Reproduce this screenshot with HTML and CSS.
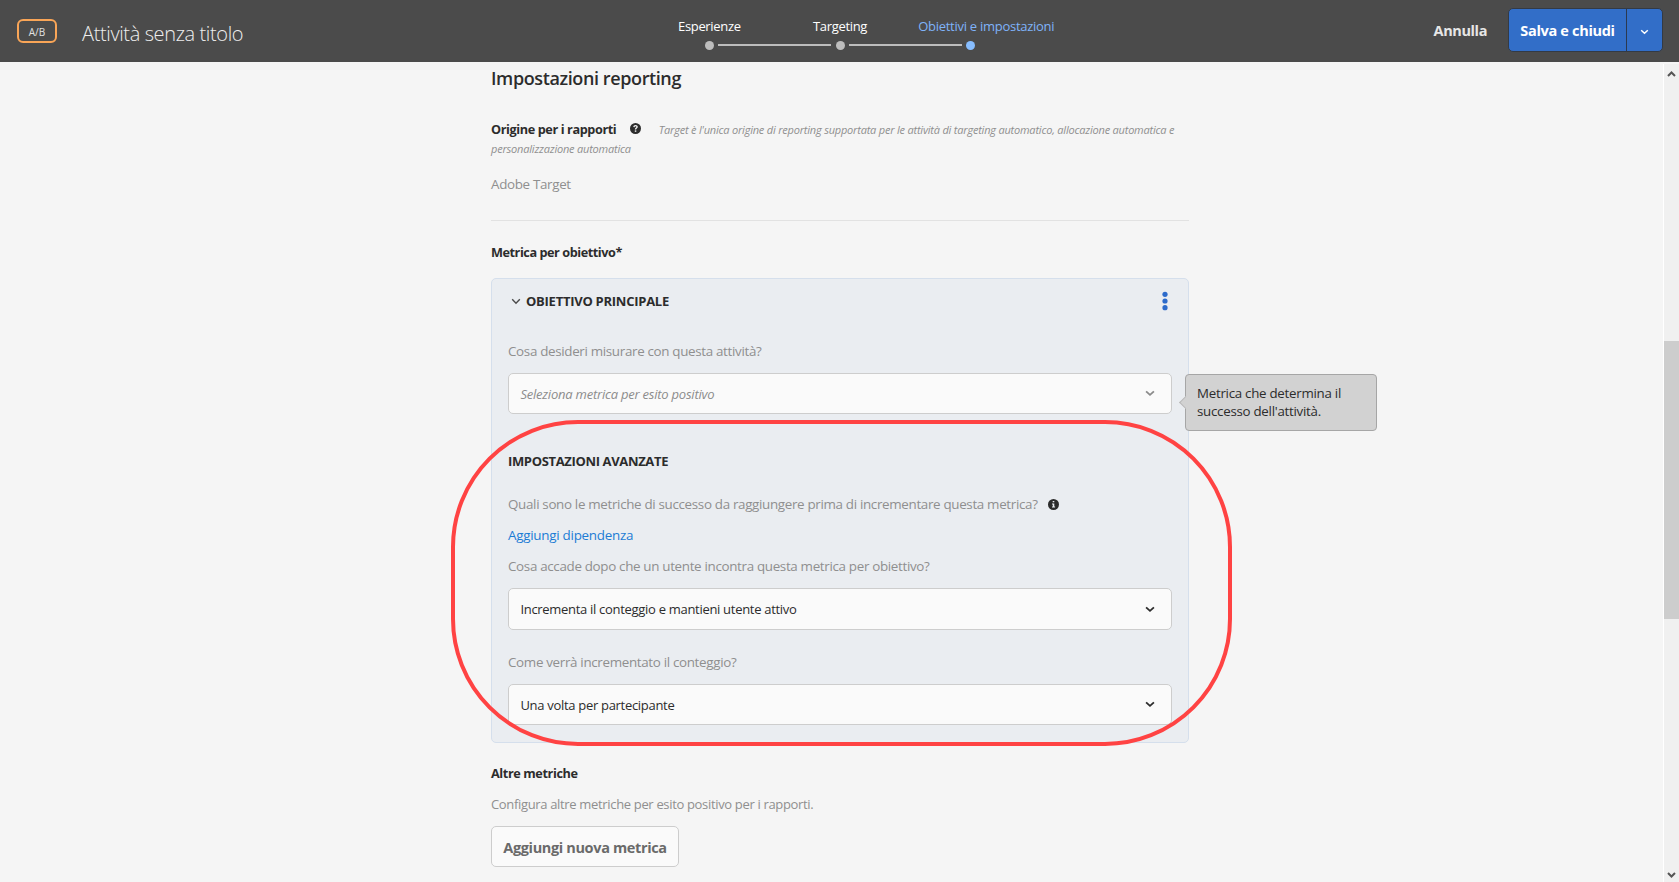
FILE: index.html
```html
<!DOCTYPE html>
<html lang="it">
<head>
<meta charset="utf-8">
<title>Attività senza titolo</title>
<link rel="stylesheet" href="styles.css">
</head>
<body>
<header class="topbar">
  <span class="badge">A/B</span>
  <h1 class="title">Attività senza titolo</h1>
  <nav class="steps">
    <div class="step"><span class="step-label">Esperienze</span><i class="dot"></i></div>
    <div class="step"><span class="step-label">Targeting</span><i class="dot"></i></div>
    <div class="step current"><span class="step-label">Obiettivi e impostazioni</span><i class="dot"></i></div>
  </nav>
  <div class="actions">
    <button class="cancel">Annulla</button>
    <div class="save">
      <button class="save-main">Salva e chiudi</button>
      <button class="save-more" aria-label="Altro"><svg width="9" height="6" viewBox="0 0 9 6"><path d="M1.2 1.2 4.5 4.2 7.8 1.2"/></svg></button>
    </div>
  </div>
</header>
<div class="body">
  <main class="content">
    <h2 class="section-title">Impostazioni reporting</h2>
    <p class="source"><b class="strong">Origine per i rapporti</b><svg class="help" width="11" height="11" viewBox="0 0 11 11"><circle cx="5.5" cy="5.5" r="5.5" fill="#2c2c2c"/><path d="M3.9 4.1C4 2.1 7.2 2.2 7.1 4 7 5.1 5.5 5.1 5.5 6.6" fill="none" stroke="#f5f5f5" stroke-width="1.4"/><rect x="4.8" y="7.4" width="1.5" height="1.4" fill="#f5f5f5"/></svg><em class="note">Target è l'unica origine di reporting supportata per le attività di targeting automatico, allocazione automatica e<br>personalizzazione automatica</em></p>
    <p class="source-value label">Adobe Target</p>
    <hr class="rule">
    <h3 class="strong goal-title">Metrica per obiettivo*</h3>
    <section class="panel">
      <div class="panel-head">
        <svg class="toggle" width="10" height="7" viewBox="0 0 10 7"><path d="M1.2 1.3 5 5.2 8.8 1.3"/></svg>
        <h4 class="caps">OBIETTIVO PRINCIPALE</h4>
        <svg class="kebab" width="6" height="20" viewBox="0 0 6 20"><circle cx="3" cy="3.3" r="2.6"/><circle cx="3" cy="10" r="2.6"/><circle cx="3" cy="16.7" r="2.6"/></svg>
      </div>
      <p class="label q-measure">Cosa desideri misurare con questa attività?</p>
      <div class="select empty">
        <span>Seleziona metrica per esito positivo</span>
        <svg class="chev" width="10" height="7" viewBox="0 0 10 7"><path d="M1.1 1.3 5 4.9 8.9 1.3"/></svg>
        <div class="tooltip">Metrica che determina il<br>successo dell'attività.</div>
      </div>
      <h4 class="caps advanced">IMPOSTAZIONI AVANZATE</h4>
      <p class="label q-success">Quali sono le metriche di successo da raggiungere prima di incrementare questa metrica?<svg class="info" width="11" height="11" viewBox="0 0 11 11"><circle cx="5.5" cy="5.5" r="5.5" fill="#2c2c2c"/><path d="M4.7 1.9h1.6v1.4H4.7zM4 4.4h2.3v3.2h.8v1H4v-1h.8V5.4H4z" fill="#eaedf1"/></svg></p>
      <a class="label link">Aggiungi dipendenza</a>
      <p class="label q-after">Cosa accade dopo che un utente incontra questa metrica per obiettivo?</p>
      <div class="select tall">
        <span>Incrementa il conteggio e mantieni utente attivo</span>
        <svg class="chev" width="10" height="7" viewBox="0 0 10 7"><path d="M1.1 1.3 5 4.9 8.9 1.3"/></svg>
      </div>
      <p class="label q-count">Come verrà incrementato il conteggio?</p>
      <div class="select">
        <span>Una volta per partecipante</span>
        <svg class="chev" width="10" height="7" viewBox="0 0 10 7"><path d="M1.1 1.3 5 4.9 8.9 1.3"/></svg>
      </div>
    </section>
    <h3 class="strong other-title">Altre metriche</h3>
    <p class="label other-text">Configura altre metriche per esito positivo per i rapporti.</p>
    <button class="add">Aggiungi nuova metrica</button>
  </main>
  <aside class="scrollbar">
    <svg class="up" width="9" height="6" viewBox="0 0 9 6"><path d="M1 5 4.5 1.5 8 5"/></svg>
    <div class="thumb"></div>
    <svg class="down" width="9" height="6" viewBox="0 0 9 6"><path d="M1 1 4.5 4.5 8 1"/></svg>
  </aside>
</div>
<div class="highlight"></div>
</body>
</html>
```
FILE: styles.css
```css
* { box-sizing: border-box; }
body {
  margin: 0;
  height: 882px;
  overflow: hidden;
  position: relative;
  background: #f5f5f5;
  color: #2c2c2c;
  font: 13px/20px "Open Sans", "Noto Sans", sans-serif;
}
h1, h2, h3, h4, p { margin: 0; }
button { font: inherit; letter-spacing: inherit; padding: 0; border: 0; background: none; color: inherit; }
svg { display: block; flex: none; }

/* Top bar */
.topbar {
  display: grid;
  grid-template-columns: 65px 579px 1fr auto;
  height: 62px;
  padding: 0 16px 0 17px;
  background: #4b4b4b;
  color: #fff;
}
.badge {
  width: 40px;
  height: 24px;
  margin-top: 19px;
  border: 2px solid #f9a557;
  border-radius: 6px;
  font-size: 10px;
  font-weight: 500;
  line-height: 22px;
  text-align: center;
  color: #e1e1e1;
}
.title {
  margin-top: 19px;
  font-size: 20px;
  font-weight: 300;
  letter-spacing: -0.38px;
  line-height: 30px;
  color: #eee;
}
.steps {
  display: grid;
  grid-template-columns: repeat(3, 130.7px);
  align-content: start;
  padding-top: 16px;
  margin-left: -17px;
  letter-spacing: -0.33px;
}
.step { position: relative; display: flex; flex-direction: column; align-items: center; white-space: nowrap; }
.dot { width: 9px; height: 9px; margin-top: 5px; border-radius: 50%; background: #bdbdbd; }
.step + .step::before {
  content: "";
  position: absolute;
  right: 74px;
  top: 28px;
  width: 113px;
  height: 2px;
  background: #bdbdbd;
}
.current { color: #7fb3f9; letter-spacing: -0.27px; }
.current .step-label { padding-left: 31px; }
.current .dot { background: #87bdff; }
.actions { display: flex; gap: 21px; padding-top: 8px; font-size: 14.5px; font-weight: 700; letter-spacing: -0.32px; }
.cancel { height: 44px; padding-top: 2px; letter-spacing: -0.4px; color: #e6e6e6; }
.save {
  display: flex;
  width: 155px;
  height: 44px;
  border: 1px solid #333a45;
  border-radius: 5px;
  background: #326ec8;
  overflow: hidden;
}
.save-main { width: 118px; padding-top: 2px; border-right: 1px solid #2b3950; }
.save-more { display: flex; flex: 1; align-items: center; justify-content: center; padding-top: 3px; }
.save-more path { fill: none; stroke: #fff; stroke-width: 1.5; }

/* Body */
.body { display: flex; justify-content: space-between; height: 820px; }
.content { width: 698px; margin-left: 491px; padding-top: 3px; }
.section-title { font-size: 18px; font-weight: 600; letter-spacing: -0.39px; line-height: 27px; }
.source { margin-top: 28px; line-height: 19px; height: 38px; white-space: nowrap; }
.strong { font-size: 12.7px; font-weight: 700; letter-spacing: -0.4px; }
.help { display: inline-block; margin: 0 18px 0 13.4px; vertical-align: 0; }
.note { font-size: 11px; letter-spacing: -0.205px; color: #8f8f8f; }
.label { display: block; height: 20px; color: #8f8f8f; font-size: 13.4px; letter-spacing: -0.33px; line-height: 19px; white-space: nowrap; }
.source-value { margin-top: 17px; }
.rule { margin: 25px 0 0; border: 0; height: 1px; background: #e2e2e2; }
.goal-title { margin-top: 21px; letter-spacing: -0.45px; }
.panel {
  height: 465px;
  margin-top: 16px;
  padding: 12px 16px 0;
  border: 1px solid #d5dfec;
  border-radius: 5px;
  background: #eaedf1;
}
.panel-head { display: flex; align-items: center; padding: 0 4px 0 3px; }
.toggle { margin-right: 5px; }
.toggle path { fill: none; stroke: #4b4b4b; stroke-width: 1.4; }
.kebab { margin-left: auto; fill: #2d6bcb; }
.caps { font-size: 13px; font-weight: 700; letter-spacing: -0.26px; }
.q-measure { margin-top: 31px; }
.select {
  position: relative;
  display: flex;
  align-items: center;
  justify-content: space-between;
  height: 41px;
  margin-top: 11px;
  padding: 0 16px 0 11.4px;
  border: 1px solid #cdcdcd;
  border-radius: 5px;
  background: #fafafa;
  letter-spacing: -0.3px;
  white-space: nowrap;
}
.tall { height: 42px; }
.empty { color: #8c8c8c; letter-spacing: -0.22px; }
.empty > span { font-style: italic; }
.chev { fill: none; stroke: #2c2c2c; stroke-width: 1.8; }
.empty .chev { stroke: #8a8a8a; }
.tooltip {
  position: absolute;
  left: 676px;
  top: 0;
  width: 192px;
  height: 57px;
  padding: 9px 11px;
  border: 1px solid #a6a6a6;
  border-radius: 4px;
  background: #d2d2d2;
  color: #2c2c2c;
  font-size: 13.3px;
  letter-spacing: -0.26px;
  line-height: 18px;
}
.tooltip::before {
  content: "";
  position: absolute;
  left: -5px;
  top: 23px;
  width: 8px;
  height: 8px;
  border: solid #b9b9b9;
  border-width: 0 0 1px 1px;
  background: #d2d2d2;
  transform: rotate(45deg);
}
.advanced { margin-top: 37px; letter-spacing: -0.35px; }
.q-success { display: flex; align-items: center; margin-top: 24px; padding-bottom: 1px; }
.info { margin-left: 10px; }
.link { margin-top: 11px; color: #1c7cd5; letter-spacing: -0.26px; }
.q-after { margin-top: 11px; }
.q-count { margin-top: 23px; }
.other-title { margin-top: 20px; }
.other-text { margin-top: 11px; font-size: 13px; letter-spacing: -0.335px; line-height: 20px; }
.add {
  display: block;
  width: 188px;
  height: 41px;
  margin-top: 12px;
  padding-top: 2px;
  border: 1px solid #cdcdcd;
  border-radius: 5px;
  background: #fafafa;
  color: #6a6a6a;
  font-size: 14.5px;
  font-weight: 700;
  letter-spacing: -0.36px;
}

/* Page scrollbar */
.scrollbar {
  display: flex;
  flex-direction: column;
  width: 16px;
  margin-top: 2px;
  padding-top: 7px;
  border-left: 1px solid #fff;
  background: #f0f0f0;
}
.scrollbar svg { margin-left: 3px; fill: none; stroke: #555; stroke-width: 2; }
.thumb { height: 278px; margin-top: 264px; background: #cdcdcd; }
.down { margin-top: auto; margin-bottom: 4px; }

/* Annotation ring over the advanced settings */
.highlight {
  position: absolute;
  left: 451px;
  top: 420px;
  width: 781px;
  height: 326px;
  border: 4px solid #ff4343;
  border-radius: 127px;
}
```
